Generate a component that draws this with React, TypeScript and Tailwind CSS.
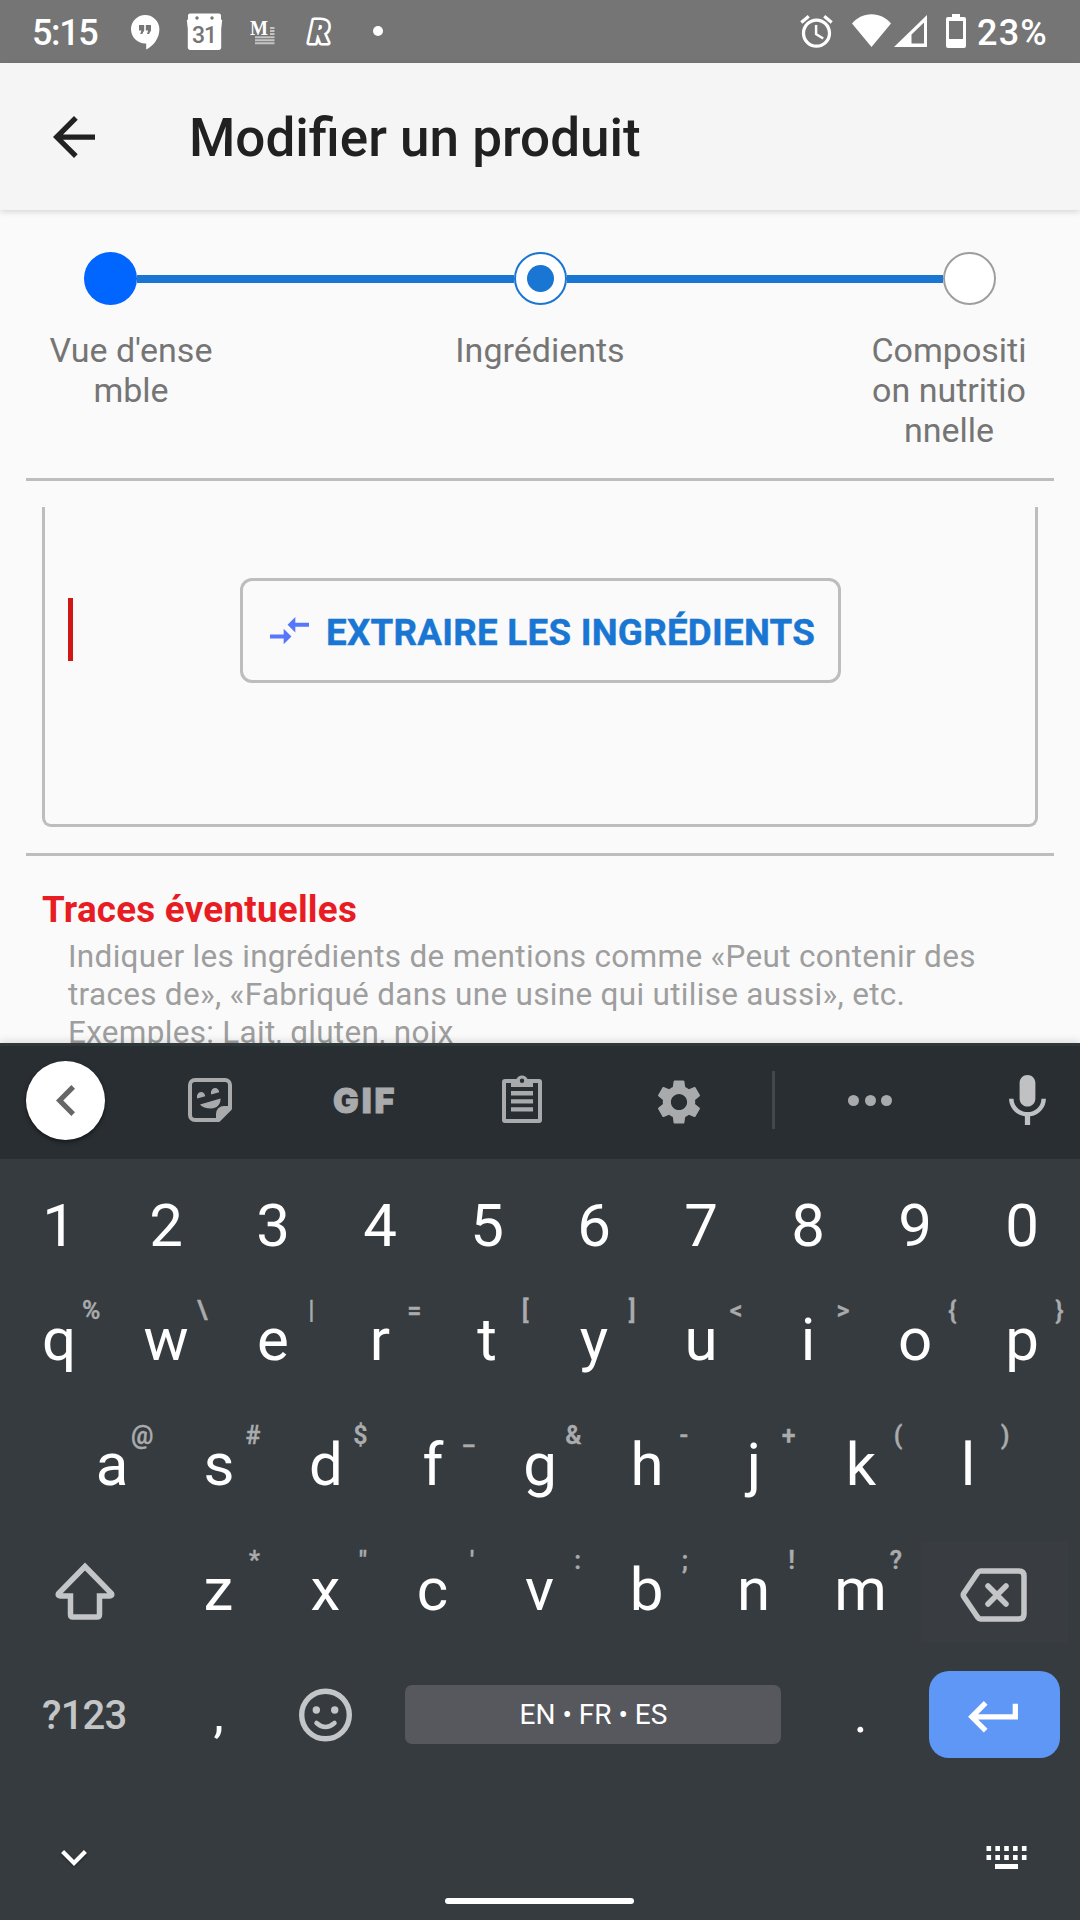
import React from 'react';
import { MdAlarm, MdSettings } from 'react-icons/md';

function StatusBar() {
  return (
    <div className="flex h-[63px] shrink-0 bg-[#757575] text-white">
      <span className="ml-[32px] w-[68px] text-[36px] leading-[66px] font-medium tracking-[-1.4px] whitespace-nowrap">5:15</span>
      <svg className="mt-[15px] ml-[31px]" width="29" height="35" viewBox="0 0 29 35" fill="#fff">
        <path d="M14.2 0C6.4 0 0 6.4 0 14.2s6.4 14.2 14.2 14.2h1V34.400C22.500 31 28.400 23 28.400 14.200 28.400 6.400 22 0 14.200 0z" />
        <path d="M8 10h5.200v5.500l-2 3.500H9.200l1.200-3.500H8zM14.800 10H20v5.500l-2 3.500h-2l1.200-3.500h-2.400z" fill="#757575" />
      </svg>
      <svg className="mt-[13px] ml-[26px]" width="37" height="38" viewBox="0 0 37 38">
        <path d="M4 .5h29a2 2 0 0 1 2 2v4l1.200.5-1 9V34a2.500 2.500 0 0 1-2.500 3H4.300A2.500 2.500 0 0 1 1.800 34V16L.8 7 2 6.500v-4A2 2 0 0 1 4 .5z" fill="#fff" />
        <circle cx="11" cy="5" r="1.700" fill="#757575" />
        <circle cx="26" cy="5" r="1.700" fill="#757575" />
        <text x="18" y="29.500" textAnchor="middle" fontFamily="Roboto" fontSize="23" fontWeight="500" letterSpacing="-1" fill="#757575">31</text>
      </svg>
      <svg className="mt-[17px] ml-[27px] overflow-visible" width="26" height="28" viewBox="0 0 26 28">
        <text x="0" y="17.500" fontFamily="Liberation Serif" fontSize="21" fontWeight="700" textLength="18" lengthAdjust="spacingAndGlyphs" fill="#fff">M</text>
        <path d="M20 11h4.500M20 14h4.500M20 17h4.500M5 20.300h19.500M5 23.300h19.500M5 26.300h19.500" stroke="#c4c4c4" strokeWidth="1.900" />
      </svg>
      <svg className="mt-[15px] ml-[29px] overflow-visible" width="30" height="34" viewBox="0 0 30 34">
        <text x="3.500" y="28" fontFamily="Open Sans" fontSize="31" fontWeight="800" fontStyle="italic" textLength="21" lengthAdjust="spacingAndGlyphs" fill="#757575" stroke="#fff" strokeWidth="5" strokeLinejoin="round" paintOrder="stroke">R</text>
      </svg>
      <span className="mt-[26px] ml-[38px] size-[10px] rounded-full bg-white" />
      <MdAlarm className="mt-[12px] ml-[414px] shrink-0" size={39} />
      <svg className="mt-[14px] ml-[16px] shrink-0" width="39" height="33" viewBox="0 0 39 33" fill="#fff">
        <path d="M0 9.500C4.500 4 11.500.2 19.500.2S34.500 4 39 9.500L19.500 33z" />
      </svg>
      <svg className="mt-[15px] ml-[3px] shrink-0" width="33" height="32" viewBox="0 0 33 32" fill="#fff">
        <path fillRule="evenodd" d="M33 0v32H0zM30 7.500 17.500 19.500V28.500H30z" />
      </svg>
      <svg className="mt-[14px] ml-[19px] shrink-0" width="20" height="34" viewBox="0 0 20 34" fill="#fff">
        <path fillRule="evenodd" d="M6 0h8v3h4a2 2 0 0 1 2 2v27a2 2 0 0 1-2 2H2a2 2 0 0 1-2-2V5a2 2 0 0 1 2-2h4zM3 7v18h14V7z" />
      </svg>
      <span className="ml-[11px] text-[36px] leading-[66px] font-medium tracking-[1.2px]">23%</span>
    </div>
  );
}

function AppHeader() {
  return (
    <header className="relative z-10 flex h-[147px] shrink-0 items-center bg-[#f5f5f5] shadow-[0_2px_6px_rgba(0,0,0,0.14)]">
      <svg className="ml-[53px]" width="42" height="42" viewBox="4 4 16 16" fill="#212121">
        <path d="M20 11H7.830l5.590-5.590L12 4l-8 8 8 8 1.410-1.410L7.830 13H20v-2z" />
      </svg>
      <h1 className="mt-[3px] ml-[94px] text-[53px] leading-[62px] font-medium whitespace-nowrap text-[#212121]">Modifier un produit</h1>
    </header>
  );
}

function StepLabel({ lines }: { lines: string[] }) {
  return (
    <div className="w-[178px] text-center text-[34px] leading-[40px] whitespace-nowrap text-[#757575]">
      {lines.map((l) => (
        <div key={l}>{l}</div>
      ))}
    </div>
  );
}

function Stepper() {
  return (
    <div>
      <div className="mt-[42px] flex items-center px-[84px]">
        <span className="size-[53px] rounded-full bg-[#0066ff]" />
        <span className="h-[8px] flex-1 bg-[#1976d2]" />
        <span className="flex size-[53px] items-center justify-center rounded-full border-2 border-[#1976d2] bg-white">
          <span className="size-[27px] rounded-full bg-[#1976d2]" />
        </span>
        <span className="h-[8px] flex-1 bg-[#1976d2]" />
        <span className="size-[53px] rounded-full border-2 border-[#9e9e9e] bg-white" />
      </div>
      <div className="mt-[25px] flex h-[121px] justify-between px-[42px]">
        <StepLabel lines={["Vue d'ense", 'mble']} />
        <StepLabel lines={['Ingrédients']} />
        <StepLabel lines={['Compositi', 'on nutritio', 'nnelle']} />
      </div>
    </div>
  );
}

function Form() {
  return (
    <main className="h-[833px] shrink-0 overflow-hidden bg-[#fafafa]">
      <Stepper />
      <div className="mx-[26px] mt-[27px] h-[3px] bg-[#bdbdbd]" />
      <div className="mx-[42px] mt-[26px] flex h-[320px] items-start rounded-b-[9px] border-x-[3px] border-b-[3px] border-[#bdbdbd]">
        <span className="mt-[91px] ml-[23px] h-[63px] w-[5px] bg-[#d01716]" />
        <button className="mt-[71px] ml-[167px] flex h-[105px] w-[601px] items-center rounded-[12px] border-[3px] border-[#bdbdbd] pl-[27px]">
          <svg width="39" height="27.300" viewBox="2 5 20 14" fill="#5677fc">
            <path d="M9.010 14H2v2h7.010v3L13 15l-3.990-4v3zm5.980-1v-3H22V8h-7.010V5L11 9l3.990 4z" />
          </svg>
          <span className="mt-[5px] ml-[17px] text-[36.75px] leading-[44px] font-bold tracking-[0.250px] whitespace-nowrap text-[#1976d2] [-webkit-text-stroke:0.4px_#1976d2]">EXTRAIRE LES INGRÉDIENTS</span>
        </button>
      </div>
      <div className="mx-[26px] mt-[26px] h-[3px] bg-[#bdbdbd]" />
      <h2 className="mt-[32px] ml-[42px] text-[36.75px] leading-[44px] font-bold tracking-[0.250px] text-[#e81c23]">Traces éventuelles</h2>
      <p className="mt-[6px] ml-[68px] text-[31.5px] leading-[38px] tracking-[0.300px] whitespace-nowrap text-[#9e9e9e]">
        Indiquer les ingrédients de mentions comme «Peut contenir des
        <br />
        traces de», «Fabriqué dans une usine qui utilise aussi», etc.
        <br />
        Exemples: Lait, gluten, noix
      </p>
    </main>
  );
}

function Toolbar() {
  return (
    <div className="flex h-[116px] items-center border-t-[3px] border-[#2e383b] bg-[#292e32] pb-[5px] text-[#a9aaac]">
      <span className="ml-[26px] flex size-[79px] items-center justify-center rounded-full bg-white shadow-[0_2px_4px_rgba(0,0,0,0.5)]">
        <svg width="19" height="31" viewBox="8 6 7.410 12" fill="#666">
          <path d="M15.410 7.410L14 6l-6 6 6 6 1.410-1.410L10.830 12z" />
        </svg>
      </span>
      <svg className="ml-[83px]" width="44" height="44" viewBox="0 0 44 44" fill="none">
        <path d="M7 2h30a5 5 0 0 1 5 5v23.500L30.500 42H7a5 5 0 0 1-5-5V7a5 5 0 0 1 5-5z" stroke="currentColor" strokeWidth="4" strokeLinejoin="round" />
        <path d="M28 43v-7a8 8 0 0 1 8-8h7v2L30.500 43z" fill="currentColor" />
        <path d="M12 26.500 32.500 20.500c.5 6-4 10-9.500 10-5 0-9-1.500-11-4zM9.200 20.500c-.8-3.500 1-6.500 3.800-6.500 2.500 0 4 1.800 4.200 4.300zM23.200 16.500c-.8-3.500 1-6.500 3.800-6.500 2.500 0 4 1.800 4.200 4.300z" fill="currentColor" />
      </svg>
      <span className="mt-[2px] ml-[101px] w-[64px] text-[34px] leading-[40px] font-black tracking-[3px] font-['Inter'] [-webkit-text-stroke:1px_#a9aaac]">GIF</span>
      <svg className="mb-[3px] ml-[105px]" width="40" height="49" viewBox="0 0 40 49" fill="currentColor">
        <path fillRule="evenodd" d="M3 5h11.500a6 6 0 0 1 11 0H37a3 3 0 0 1 3 3v38a3 3 0 0 1-3 3H3a3 3 0 0 1-3-3V8a3 3 0 0 1 3-3zm1 4v36h32V9h-5v4H9V9zM20 4.500a2.200 2.200 0 1 0 0 4.400 2.200 2.200 0 0 0 0-4.400z" />
        <path d="M9 17h22v4.500H9zM9 25.200h22v4.200H9zM9 33.200h22v4.200H9z" />
      </svg>
      <MdSettings className="mt-[4px] ml-[110px] shrink-0" size={54} />
      <span className="ml-[66px] h-[58px] w-[3px] bg-[#43484c]" />
      <span className="ml-[73px] flex gap-[5.500px]">
        <span className="size-[11px] rounded-full bg-[#a9aaac]" />
        <span className="size-[11px] rounded-full bg-[#a9aaac]" />
        <span className="size-[11px] rounded-full bg-[#a9aaac]" />
      </span>
      <svg className="ml-[117px] shrink-0" width="37" height="50" viewBox="5 2 14 19" fill="#c0c1c3">
        <path d="M12 14c1.660 0 2.990-1.340 2.990-3L15 5c0-1.660-1.340-3-3-3S9 3.340 9 5v6c0 1.660 1.340 3 3 3zm5.300-3c0 3-2.540 5.100-5.300 5.100S6.700 14 6.700 11H5c0 3.410 2.720 6.230 6 6.720V21h2v-3.280c3.280-.48 6-3.300 6-6.720h-1.700z" />
      </svg>
    </div>
  );
}

function Key({ label, hint }: { label: string; hint?: string }) {
  return (
    <span className="relative flex w-[107px] shrink-0 items-center justify-center text-[60px] leading-[70px] text-white">
      {label}
      {hint && (
        <span className="absolute top-[18.500px] right-[12px] text-[25px] leading-[30px] font-semibold text-[#a9abad] [-webkit-text-stroke:0.3px_#a9abad]">{hint}</span>
      )}
    </span>
  );
}

function Keys({ keys, hints = '' }: { keys: string; hints?: string }) {
  return (
    <>
      {keys.split('').map((k, i) => (
        <Key key={k} label={k} hint={hints[i]} />
      ))}
    </>
  );
}

function Keyboard() {
  return (
    <section className="relative z-10 h-[877px] shrink-0 bg-[#363b3f] shadow-[0_-2px_8px_rgba(0,0,0,0.12)]">
      <Toolbar />
      <div className="mt-[15px] flex h-[103px] pl-[5.500px]">
        <Keys keys="1234567890" />
      </div>
      <div className="flex h-[125px] pl-[5.500px]">
        <Keys keys="qwertyuiop" hints="%\|=[]<>{}" />
      </div>
      <div className="flex h-[125px] pl-[58.500px]">
        <Keys keys="asdfghjkl" hints="@#$_&-+()" />
      </div>
      <div className="flex h-[125px]">
        <svg className="mt-[35px] mr-[50px] ml-[55px]" width="60" height="58" viewBox="0 0 60 58" fill="none" stroke="#c4c5c7" strokeWidth="5.500" strokeLinejoin="round">
          <path d="M30 4.500 3.500 31.500Q2.500 34 5.500 34H15.500V52.500Q15.500 55 18 55H42Q44.500 55 44.500 52.500V34H54.500Q57.500 34 56.500 31.500Z" strokeLinejoin="miter" />
        </svg>
        <Keys keys="zxcvbnm" hints={`*"':;!?`} />
        <span className="mt-[14px] ml-[7px] flex h-[102px] w-[147px] items-center bg-[#393d41] pl-[39px]">
          <svg className="mt-[6px]" width="67" height="54" viewBox="0 0 67 54" fill="none" stroke="#c4c5c7" strokeWidth="5.500" strokeLinejoin="round" strokeLinecap="round">
            <path d="M20.500 3H59Q64 3 64 8V46Q64 51 59 51H20.500Q19 51 17.500 49L4 29Q2.500 27 4 25L17.500 5Q19 3 20.500 3Z" />
            <path d="m28 18 18 18M46 18 28 36" />
          </svg>
        </span>
      </div>
      <div className="flex h-[125px] items-center">
        <span className="mt-[2px] ml-[42px] w-[86px] text-[40px] leading-[48px] font-medium tracking-[-0.800px] whitespace-nowrap text-[#c4c5c7]">?123</span>
        <span className="ml-[37px] w-[107px] text-center text-[52px] leading-[60px] text-white">,</span>
        <svg className="ml-[27px]" width="53" height="54" viewBox="0 0 53 54" fill="none" stroke="#c4c5c7">
          <circle cx="26.500" cy="27" r="23.800" strokeWidth="5.400" />
          <path d="M17.500 35q9 8 18 0" strokeWidth="4.500" strokeLinecap="round" />
          <circle cx="17.300" cy="22" r="3.700" fill="#c4c5c7" stroke="none" />
          <circle cx="35.700" cy="22" r="3.700" fill="#c4c5c7" stroke="none" />
        </svg>
        <span className="ml-[53px] flex h-[59px] w-[376px] items-center justify-center rounded-[7px] bg-[#56585e] pt-px pl-px text-[28px] leading-[34px] text-white">EN • FR • ES</span>
        <span className="ml-[26px] w-[107px] text-center text-[52px] leading-[60px] text-white">.</span>
        <span className="ml-[15px] flex h-[87px] w-[131px] items-center rounded-[20px] bg-[#5e97f6] pl-[39px]">
          <svg className="mt-[5px]" width="50" height="31.500" viewBox="2 6 19 12" fill="#fff">
            <path d="M19 7v4H5.830l3.580-3.590L8 6l-6 6 6 6 1.410-1.410L5.830 13H21V7h-2z" />
          </svg>
        </span>
      </div>
      <div className="mt-[65px] flex h-[30px] items-center justify-between pr-[53px] pl-[61px]">
        <svg className="mt-[2px] drop-shadow-[0_1px_1px_rgba(0,0,0,0.5)]" width="26" height="16" viewBox="6 8.590 12 7.410" fill="#fff">
          <path d="M7.410 8.590L12 13.170l4.590-4.580L18 10l-6 6-6-6z" />
        </svg>
        <svg width="41" height="23" viewBox="0 0 41 23" fill="none" stroke="#fff" strokeWidth="5">
          <path d="M.5 2.500h40M.5 11.500h40" strokeDasharray="4.600 4.250" />
          <path d="M9 20.500h23" />
        </svg>
      </div>
      <div className="mt-[26px] ml-[445px] h-[6px] w-[189px] rounded-full bg-white" />
    </section>
  );
}

export default function App() {
  return (
    <div className="flex h-[1920px] w-[1080px] flex-col overflow-hidden bg-[#fafafa] font-['Roboto',sans-serif]">
      <StatusBar />
      <AppHeader />
      <Form />
      <Keyboard />
    </div>
  );
}
